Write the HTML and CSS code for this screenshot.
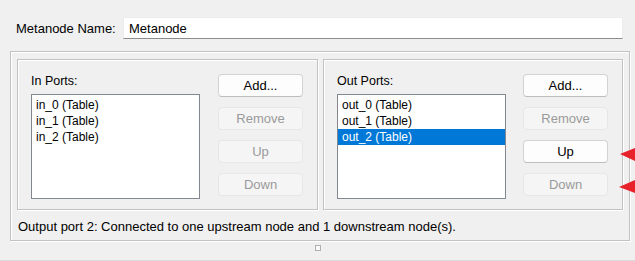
FILE: index.html
```html
<!DOCTYPE html>
<html lang="en">
	<head>
		<meta charset="UTF-8" />
		<title>Metanode</title>
		<link rel="stylesheet" href="styles.css">
	</head>
	<body>
		<div class="dialog">
			<div class="name-row">
				<label class="name-label">Metanode Name:</label>
				<div class="name-field">Metanode</div>
			</div>

			<div class="group etched">
				<div class="panels">
					<div class="panel etched">
						<div class="list-col">
							<div class="list-title">In Ports:</div>
							<ul class="port-list">
								<li>in_0 (Table)</li>
								<li>in_1 (Table)</li>
								<li>in_2 (Table)</li>
							</ul>
						</div>
						<div class="btn-col">
							<button class="btn">Add...</button>
							<button class="btn" disabled>Remove</button>
							<button class="btn" disabled>Up</button>
							<button class="btn" disabled>Down</button>
						</div>
					</div>

					<div class="panel etched">
						<div class="list-col">
							<div class="list-title">Out Ports:</div>
							<ul class="port-list">
								<li>out_0 (Table)</li>
								<li>out_1 (Table)</li>
								<li class="selected">out_2 (Table)</li>
							</ul>
						</div>
						<div class="btn-col">
							<button class="btn">Add...</button>
							<button class="btn" disabled>Remove</button>
							<button class="btn">Up</button>
							<button class="btn" disabled>Down</button>
						</div>
					</div>
				</div>
				<div class="status">Output port 2: Connected to one upstream node and 1 downstream node(s).</div>
			</div>

			<div class="handle-row"><span class="handle"></span></div>
		</div>

		<!-- annotation arrows -->
		<svg class="arrows" width="20" height="60" viewBox="0 0 20 60">
			<polygon points="1,9 16,3 16,16" />
			<polygon points="0,42 16,35 16,48" />
		</svg>
	</body>
</html>
```

FILE: styles.css
```css
    body {
      margin: 0;
      width: 635px;
      height: 261px;
      overflow: hidden;
      background: #f0f0f0;
      font-family: "Liberation Sans", Arial, sans-serif;
      font-size: 13px;
      color: #000;
      position: relative;
    }
    .dialog {
      height: 260px;
      border-bottom: 1px solid #dadada;
    }
    .name-row {
      display: flex;
      align-items: center;
      padding: 17px 12px 0 16px;
    }
    .name-label {
      width: 107px;
    }
    .name-field {
      flex: 1;
      height: 22px;
      box-sizing: border-box;
      background: #fff;
      border: 1px solid #ececec;
      border-bottom-color: #8c8c8c;
      padding: 3px 0 0 5px;
    }
    .etched {
      border: 1px solid #c2c2c2;
      box-shadow: inset 1px 1px 0 #fff, 1px 1px 0 #fff;
      box-sizing: border-box;
    }
    .group {
      margin: 12px 5px 0 10px;
      height: 190px;
      padding: 7px 6px 0 6px;
    }
    .panels {
      display: flex;
      gap: 5px;
    }
    .panel {
      height: 151px;
      flex: 1;
      display: flex;
      justify-content: space-between;
      padding: 14px 14px 0 13px;
    }
    .panel:first-child {
      flex: 0 0 301px;
    }
    .list-col {
      width: 169px;
    }
    .list-title {
      line-height: 15px;
      margin-bottom: 5px;
      font-size: 12.5px;
    }
    .port-list {
      list-style: none;
      margin: 0;
      padding: 2px 0 0 0;
      height: 105px;
      box-sizing: border-box;
      background: #fff;
      border: 1px solid #828790;
      font-size: 12px;
    }
    .port-list li {
      height: 16px;
      line-height: 16px;
      padding-left: 4px;
    }
    .port-list li.selected {
      background: #0078d7;
      color: #fff;
    }
    .btn-col {
      width: 85px;
      display: flex;
      flex-direction: column;
      gap: 10px;
    }
    .btn {
      height: 23px;
      width: 85px;
      padding: 0;
      font-family: inherit;
      font-size: 13px;
      color: #000;
      background: #fdfdfd;
      border: 1px solid #d3d3d3;
      border-bottom-color: #bdbdbd;
      border-radius: 4px;
    }
    .btn:disabled {
      background: #f5f5f5;
      border-color: #e7e7e7;
      color: #9a9a9a;
    }
    .status {
      margin-top: 9px;
      padding-left: 1px;
      line-height: 16px;
    }
    .handle-row {
      display: flex;
      justify-content: center;
      padding-top: 4px;
    }
    .handle {
      width: 4px;
      height: 4px;
      border: 1px solid #b0b0b0;
      background: #fafafa;
      margin-left: 1px;
    }
    .arrows {
      position: absolute;
      left: 619px;
      top: 145px;
    }
    .arrows polygon {
      fill: #e8222b;
    }
```
